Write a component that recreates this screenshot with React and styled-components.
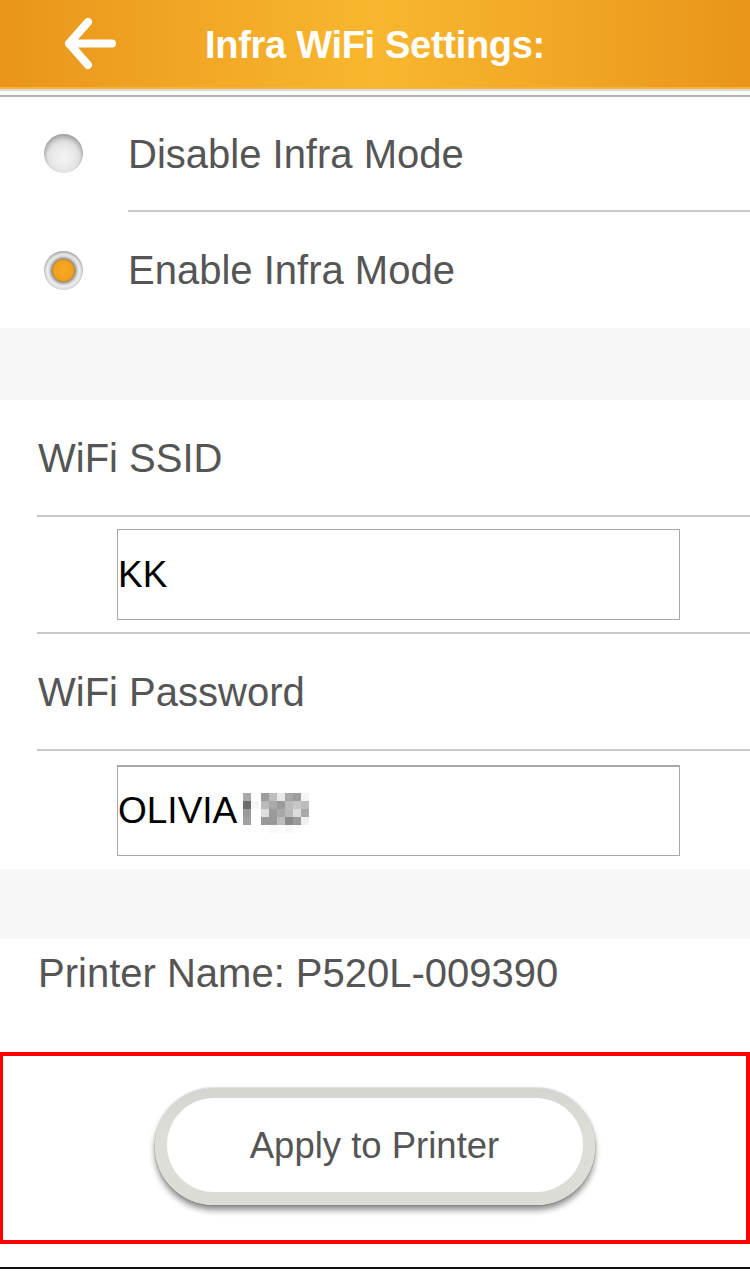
import React from "react";
import styled, { createGlobalStyle } from "styled-components";

const GlobalStyle = createGlobalStyle`
  html, body {
    margin: 0;
    padding: 0;
    background: #ffffff;
  }
  body {
    font-family: "Liberation Sans", Arial, sans-serif;
    -webkit-font-smoothing: antialiased;
  }
`;

const Page = styled.div`
  width: 750px;
  height: 1278px;
  overflow: hidden;
  display: flex;
  flex-direction: column;
  background: #ffffff;
`;

const Header = styled.header`
  height: 87px;
  flex-shrink: 0;
  display: flex;
  align-items: center;
  background: linear-gradient(90deg, #e8951a 0%, #f3aa27 30%, #f8b72e 50%, #f3aa27 70%, #e8951a 100%);
`;

const HeaderEdge = styled.div`
  height: 10px;
  flex-shrink: 0;
  background: linear-gradient(
    180deg,
    #f7b23a 0px,
    #f7b23a 2px,
    #d9d9d9 2px,
    #d9d9d9 4px,
    #ffffff 4px,
    #ffffff 8px,
    #b4b4b4 8px,
    #b4b4b4 10px
  );
`;

const BackButton = styled.button`
  width: 60px;
  height: 60px;
  margin-left: 58px;
  padding: 0;
  border: 0;
  background: none;
  display: flex;
  align-items: center;
  justify-content: center;
`;

const Title = styled.h1`
  flex: 1;
  margin: 4px 0 0 -118px;
  text-align: center;
  color: #ffffff;
  font-size: 38px;
  font-weight: bold;
  letter-spacing: -0.3px;
`;

const Group = styled.section`
  display: flex;
  flex-direction: column;
  background: #ffffff;
`;

const RadioRow = styled.div`
  height: ${(p) => (p.tall ? "116px" : "115px")};
  display: flex;
  align-items: stretch;
  padding-left: 44px;
`;

const RadioDot = styled.span`
  width: 39px;
  height: 39px;
  align-self: center;
  border-radius: 50%;
  flex-shrink: 0;
  margin-top: ${(p) => (p.checked ? "0" : "-3px")};
  box-shadow: inset 0 2px 3px rgba(0, 0, 0, 0.22), 0 1px 1px rgba(255, 255, 255, 0.8);
  background: ${(p) =>
    p.checked
      ? "radial-gradient(circle at 50% 50%, #f7aa22 0, #f0a020 10px, #c98a2a 11px, #9c9c9c 12px, #d5d5d5 14px, #efefef 16px, #d2d2d2 19.5px)"
      : "radial-gradient(circle at 50% 60%, #f3f3f3 0, #ececec 9px, #e2e2e2 15px, #c6c6c6 19.5px)"};
`;

const RadioLabel = styled.div`
  flex: 1;
  margin-left: 45px;
  display: flex;
  align-items: center;
  font-size: 40px;
  color: #555555;
  border-bottom: ${(p) => (p.divider ? "2px solid #c8c7cc" : "0")};
  padding-top: ${(p) => (p.divider ? "2px" : "1px")};
`;

const Band = styled.div`
  height: ${(p) => p.h}px;
  flex-shrink: 0;
  background: #f7f7f7;
`;

const LabelRow = styled.div`
  height: 117px;
  box-sizing: border-box;
  margin-left: 37px;
  display: flex;
  align-items: center;
  padding: 2px 0 0 1px;
  font-size: 40px;
  color: #555555;
  border-bottom: 2px solid #c8c7cc;
`;

const FieldRow = styled.div`
  height: ${(p) => (p.last ? "118px" : "117px")};
  margin-left: 37px;
  padding-left: 80px;
  display: flex;
  align-items: flex-start;
  padding-top: ${(p) => (p.last ? "14px" : "12px")};
  box-sizing: border-box;
  border-bottom: ${(p) => (p.last ? "0" : "2px solid #c8c7cc")};
`;

const Field = styled.div`
  width: 563px;
  height: 91px;
  box-sizing: border-box;
  border: 1px solid #a8a8a8;
  border-top: ${(p) => (p.heavy ? "2px solid #a8a8a8" : "1px solid #a8a8a8")};
  display: flex;
  align-items: center;
  font-size: 37px;
  color: #000000;
  background: #ffffff;
`;

const PrinterRow = styled.div`
  height: 68px;
  display: flex;
  align-items: center;
  padding-left: 38px;
  font-size: 40px;
  color: #555555;
`;

const Highlight = styled.div`
  margin-top: 45px;
  height: 192px;
  flex-shrink: 0;
  box-sizing: border-box;
  border: 4px solid #ff0000;
  border-left-width: 3px;
  display: flex;
  align-items: center;
  justify-content: center;
  padding-bottom: 4px;
`;

const ApplyButton = styled.button`
  width: 440px;
  height: 117px;
  border-radius: 59px;
  border: 0;
  padding: 10px 12px 13px;
  box-sizing: border-box;
  background: linear-gradient(180deg, #d4d4d0 0%, #deded9 40%, #dcdcd7 100%);
  box-shadow: 0 5px 6px rgba(0, 0, 0, 0.45), 0 0 2px rgba(0, 0, 0, 0.35);
  display: flex;
`;

const ButtonFace = styled.span`
  flex: 1;
  border-radius: 48px;
  background: #ffffff;
  display: flex;
  align-items: center;
  justify-content: center;
  font-family: "Liberation Sans", Arial, sans-serif;
  font-size: 36.5px;
  color: #555555;
  padding-top: 2px;
`;

const BottomRule = styled.div`
  margin-top: 23px;
  height: 2px;
  flex-shrink: 0;
  background: #111111;
`;

function BackArrow() {
  return (
    <svg width="56" height="56" viewBox="0 0 56 56">
      <path
        d="M28 6 L9 27.5 L28 49 M9 27.5 L52 27.5"
        fill="none"
        stroke="#ffffff"
        strokeWidth="8"
        strokeLinecap="round"
        strokeLinejoin="round"
      />
    </svg>
  );
}

const mosaic = [
  ["#a9a9a9", null, "#9c9c9c", "#bdbdbd", "#e9e9e9", "#a8a8a8", "#9d9d9d", "#f4f4f4"],
  ["#6c6c6c", "#f6f6f6", "#bababa", "#a9a9a9", "#9a9a9a", "#bcbcbc", "#c6c6c6", "#bcbcbc"],
  ["#999999", null, "#dedede", "#9b9b9b", "#a9a9a9", "#b9b9b9", "#dcdcdc", "#a9a9a9"],
  ["#a1a1a1", null, "#999999", "#999999", "#bcbcbc", "#8a8a8a", "#9a9a9a", "#efefef"],
  [null, null, null, "#f8f8f8", "#fbfbfb", "#f8f8f8", "#fcfcfc", null],
];

function Mosaic() {
  return (
    <svg width="66" height="40" viewBox="0 0 66 40" style={{ marginLeft: 6, marginTop: 4 }}>
      {mosaic.map((row, r) =>
        row.map((c, i) =>
          c ? <rect key={`${r}-${i}`} x={i * 8 + (i > 1 ? 2 : 0)} y={r * 8} width="8" height="8" fill={c} /> : null
        )
      )}
    </svg>
  );
}

export default function App() {
  return (
    <Page>
      <GlobalStyle />
      <Header>
        <BackButton aria-label="Back">
          <BackArrow />
        </BackButton>
        <Title>Infra WiFi Settings:</Title>
      </Header>
      <HeaderEdge />

      <Group>
        <RadioRow>
          <RadioDot />
          <RadioLabel divider>Disable Infra Mode</RadioLabel>
        </RadioRow>
        <RadioRow tall>
          <RadioDot checked />
          <RadioLabel>Enable Infra Mode</RadioLabel>
        </RadioRow>
      </Group>

      <Band h={72} />

      <Group>
        <LabelRow>WiFi SSID</LabelRow>
        <FieldRow>
          <Field>KK</Field>
        </FieldRow>
        <LabelRow>WiFi Password</LabelRow>
        <FieldRow last>
          <Field heavy>
            OLIVIA
            <Mosaic />
          </Field>
        </FieldRow>
      </Group>

      <Band h={70} />

      <PrinterRow>Printer Name: P520L-009390</PrinterRow>

      <Highlight>
        <ApplyButton>
          <ButtonFace>Apply to Printer</ButtonFace>
        </ApplyButton>
      </Highlight>

      <BottomRule />
    </Page>
  );
}
